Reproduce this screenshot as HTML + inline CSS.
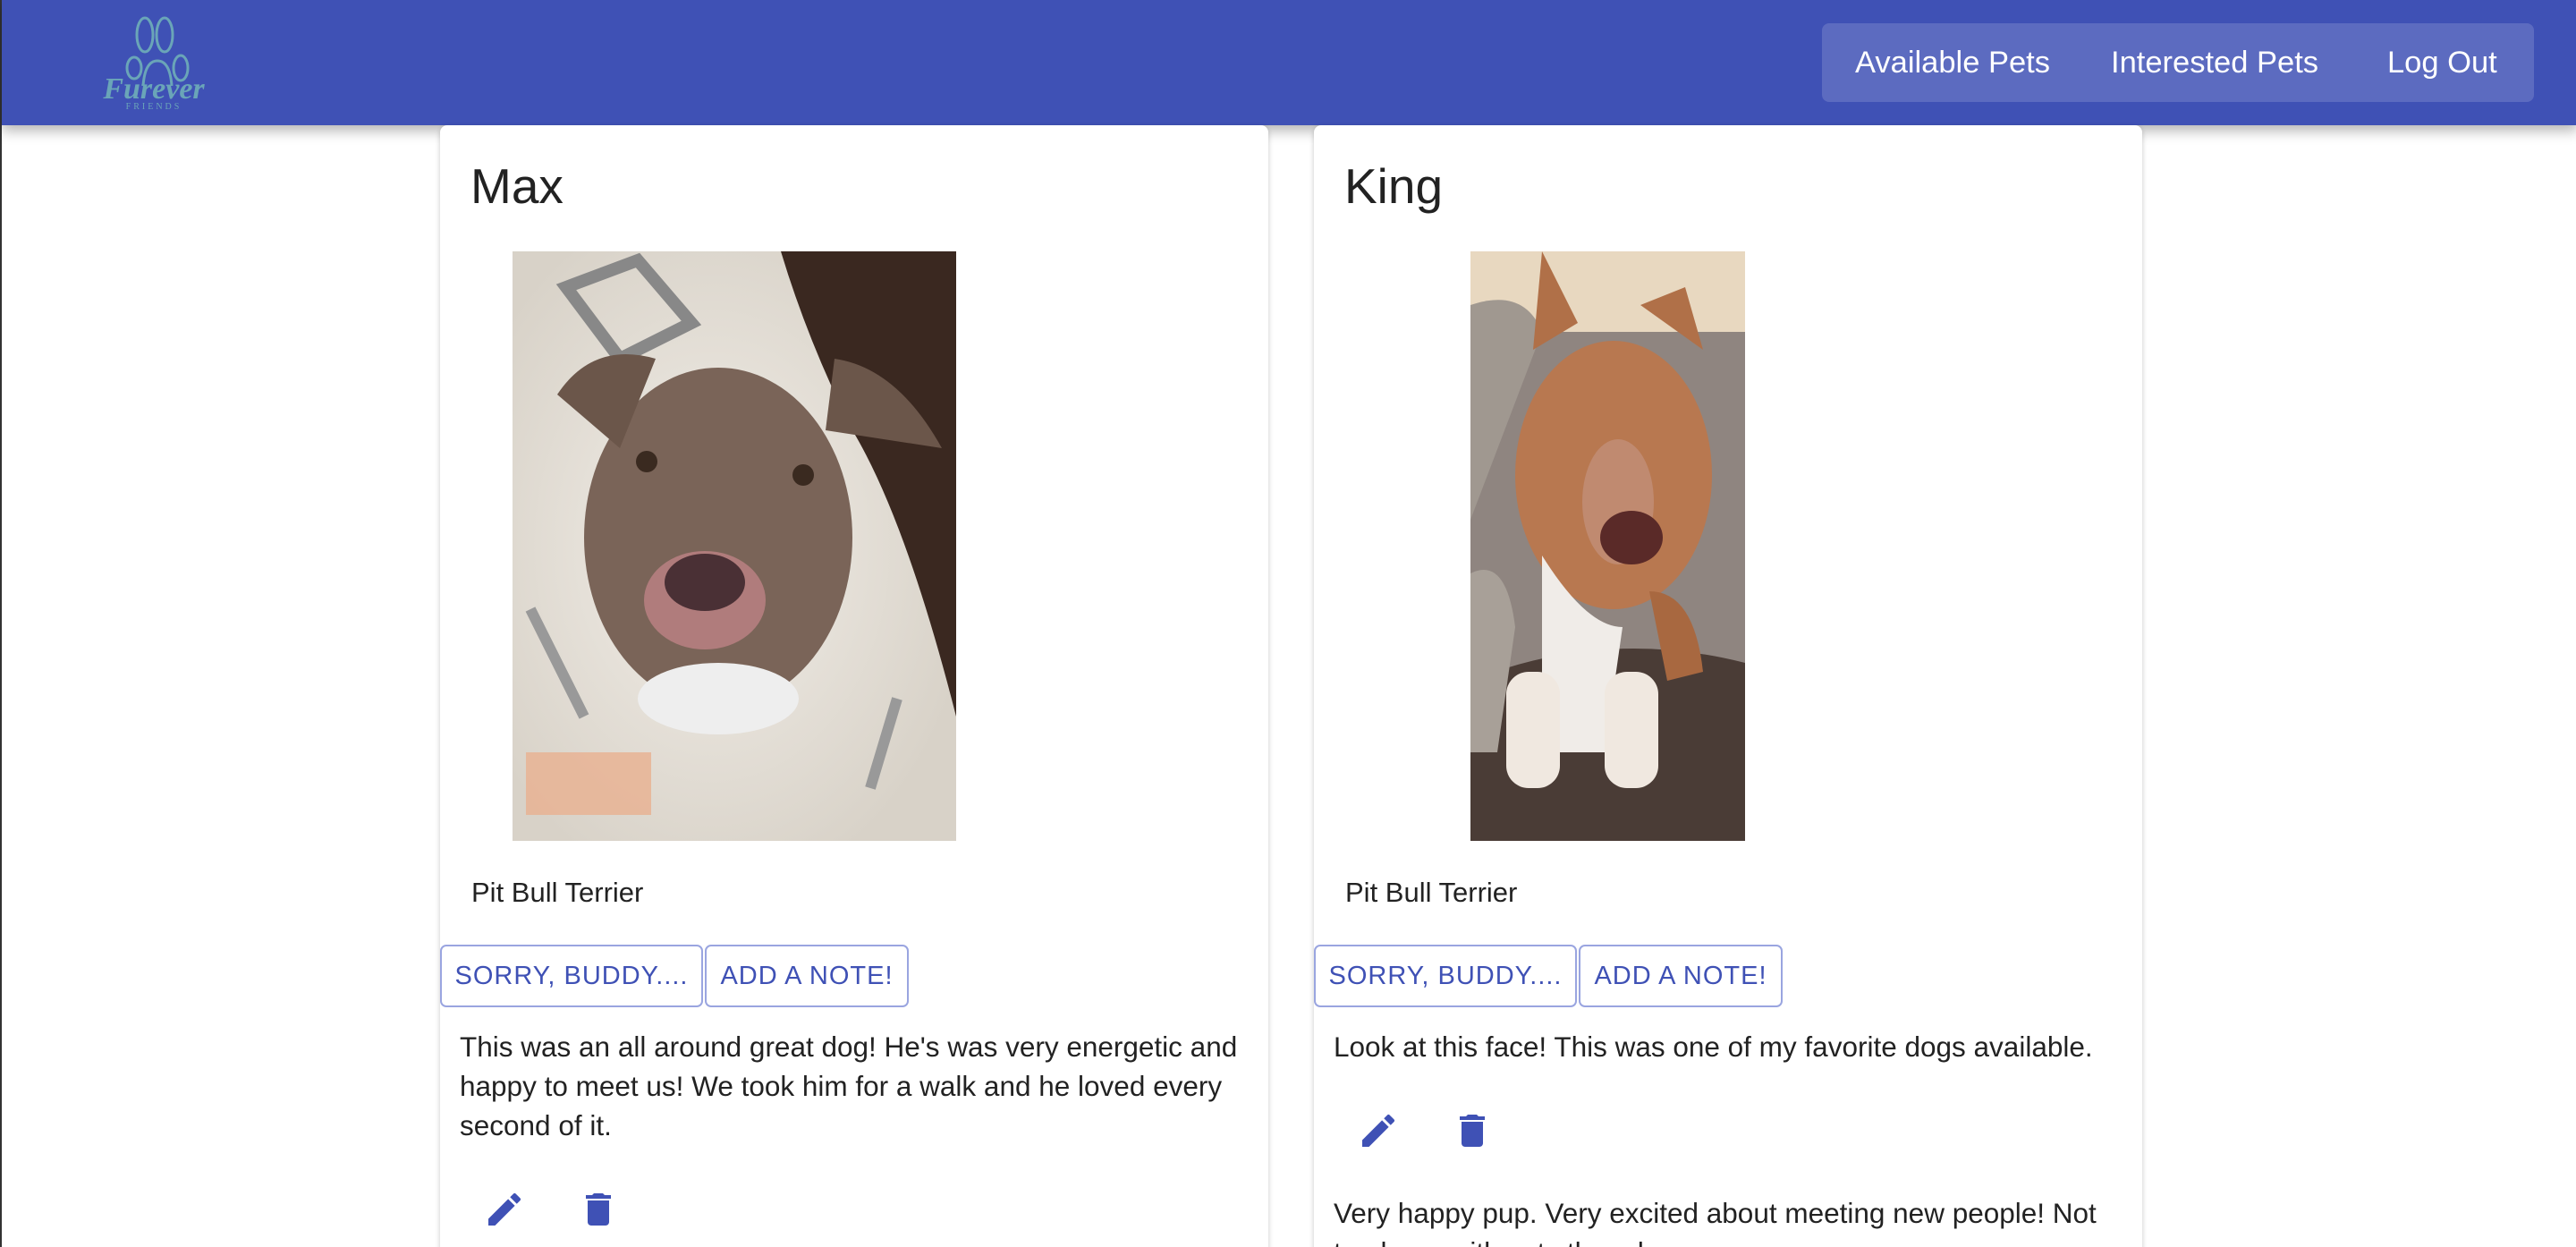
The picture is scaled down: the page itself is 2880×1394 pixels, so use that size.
<!DOCTYPE html>
<html><head><meta charset="utf-8"><style>
*{margin:0;padding:0;box-sizing:border-box}
html,body{width:2880px;height:1394px;overflow:hidden;background:#fff;font-family:"Liberation Sans",Arial,sans-serif}
body{border-left:2px solid #333;position:relative}
.hdr{position:absolute;left:0;top:0;width:2880px;height:140px;background:#3f51b5;box-shadow:0 6px 14px rgba(0,0,0,.3);z-index:2}
.nav{position:absolute;left:2035px;top:26px;width:796px;height:88px;background:#5c6bc0;border-radius:8px}
.nav span{position:absolute;top:22px;color:#fff;font-size:34.5px;line-height:44px}
.card{position:absolute;top:140px;width:926px;height:1300px;background:#fff;border-radius:8px;box-shadow:0 2px 6px rgba(0,0,0,.22);z-index:3;overflow:hidden}
.title{position:absolute;left:34px;top:36px;font-size:55px;color:#222}
.breed{position:absolute;left:35px;top:840px;font-size:31px;color:#222}
.btn{position:absolute;top:916px;height:70px;border:2px solid #9aa5e0;border-radius:7px;color:#3f51b5;font-size:29px;line-height:66px;text-align:center;letter-spacing:1px}
.note{position:absolute;left:22px;width:880px;font-size:31.5px;line-height:44px;color:#222}
.ic{position:absolute;width:48px;height:48px}
</style></head><body>
<div class="hdr">
 <svg style="position:absolute;left:112px;top:18px" width="118" height="106" viewBox="0 0 118 106">
  <g fill="none" stroke="#6aa5b8" stroke-width="3">
   <ellipse cx="48" cy="21" rx="9" ry="19"/><ellipse cx="70" cy="21" rx="9" ry="19"/>
   <ellipse cx="36" cy="58" rx="8" ry="12"/><ellipse cx="88" cy="58" rx="8" ry="14"/>
   <path d="M46 78 Q48 50 62 50 Q76 50 78 78"/>
  </g>
  <text x="58" y="92" text-anchor="middle" font-family="Liberation Serif,serif" font-style="italic" font-weight="bold" font-size="34" fill="#6aa5b8">Furever</text>
  <text x="58" y="104" text-anchor="middle" font-family="Liberation Serif,serif" font-size="10" letter-spacing="3" fill="#6aa5b8">FRIENDS</text>
 </svg>
 <div class="nav"><span style="left:37px">Available Pets</span><span style="left:323px">Interested Pets</span><span style="left:632px">Log Out</span></div>
</div>

<div class="card" style="left:490px">
 <div class="title">Max</div>
 <svg style="position:absolute;left:81px;top:141px" width="496" height="659" viewBox="0 0 496 659">
  <defs><radialGradient id="g1" cx=".45" cy=".5" r=".6"><stop offset="0" stop-color="#f2eee8"/><stop offset="1" stop-color="#d8d2c8"/></radialGradient></defs>
  <rect width="496" height="659" fill="url(#g1)"/>
  <path d="M300 0 H496 V520 Q440 300 380 200 Q330 100 300 0Z" fill="#3a2820"/>
  <path d="M60 40 L140 10 L200 80 L120 120Z" fill="none" stroke="#888" stroke-width="14"/>
  <path d="M20 400 L80 520 M430 500 L400 600" stroke="#999" stroke-width="12"/>
  <ellipse cx="230" cy="320" rx="150" ry="190" fill="#7a6458"/>
  <path d="M50 160 Q90 100 160 120 L120 220Z" fill="#6b564a"/>
  <path d="M360 120 Q430 130 480 220 L350 200Z" fill="#6b564a"/>
  <ellipse cx="215" cy="390" rx="68" ry="55" fill="#b07c7c"/>
  <ellipse cx="215" cy="370" rx="45" ry="32" fill="#4a3035"/>
  <circle cx="150" cy="235" r="12" fill="#3a2a20"/><circle cx="325" cy="250" r="12" fill="#3a2a20"/>
  <ellipse cx="230" cy="500" rx="90" ry="40" fill="#eee"/>
  <rect x="15" y="560" width="140" height="70" fill="#e8b090" opacity=".8"/>
 </svg>
 <div class="breed">Pit Bull Terrier</div>
 <div class="btn" style="left:0;width:294px">SORRY, BUDDY....</div>
 <div class="btn" style="left:296px;width:228px">ADD A NOTE!</div>
 <div class="note" style="top:1008px">This was an all around great dog! He's was very energetic and happy to meet us! We took him for a walk and he loved every second of it.</div>
 <svg class="ic" style="left:48px;top:1188px" viewBox="0 0 24 24"><path fill="#3f51b5" d="M3 17.25V21h3.75L17.81 9.94l-3.75-3.75L3 17.25zM20.71 7.04a1 1 0 000-1.41l-2.34-2.34a1 1 0 00-1.41 0l-1.83 1.83 3.75 3.75 1.83-1.83z"/></svg>
 <svg class="ic" style="left:153px;top:1188px" viewBox="0 0 24 24"><path fill="#3f51b5" d="M6 19c0 1.1.9 2 2 2h8c1.1 0 2-.9 2-2V7H6v12zM19 4h-3.5l-1-1h-5l-1 1H5v2h14V4z"/></svg>
</div>

<div class="card" style="left:1467px">
 <div class="title">King</div>
 <svg style="position:absolute;left:175px;top:141px" width="307" height="659" viewBox="0 0 307 659">
  <rect width="307" height="659" fill="#8f8580"/>
  <rect width="307" height="90" fill="#e8d8c0"/>
  <path d="M0 60 Q60 40 80 90 L0 300Z" fill="#a09890"/>
  <path d="M0 480 Q150 420 307 460 V659 H0Z" fill="#4a3c36"/>
  <path d="M0 360 Q40 340 50 420 L30 560 L0 560Z" fill="#a8a098"/>
  <ellipse cx="160" cy="250" rx="110" ry="150" fill="#b87850"/>
  <path d="M70 110 L80 0 L120 80Z M190 60 L240 40 L260 110Z" fill="#b07048"/>
  <ellipse cx="165" cy="280" rx="40" ry="70" fill="#c08a70"/>
  <ellipse cx="180" cy="320" rx="35" ry="30" fill="#5a2a28"/>
  <path d="M80 340 Q130 420 170 420 L150 560 L80 560Z" fill="#f0ece8"/>
  <rect x="40" y="470" width="60" height="130" rx="25" fill="#f0e8e0"/>
  <rect x="150" y="470" width="60" height="130" rx="25" fill="#f0e8e0"/>
  <path d="M200 380 Q250 380 260 470 L220 480Z" fill="#a86840"/>
 </svg>
 <div class="breed">Pit Bull Terrier</div>
 <div class="btn" style="left:0;width:294px">SORRY, BUDDY....</div>
 <div class="btn" style="left:296px;width:228px">ADD A NOTE!</div>
 <div class="note" style="top:1008px">Look at this face! This was one of my favorite dogs available.</div>
 <svg class="ic" style="left:48px;top:1100px" viewBox="0 0 24 24"><path fill="#3f51b5" d="M3 17.25V21h3.75L17.81 9.94l-3.75-3.75L3 17.25zM20.71 7.04a1 1 0 000-1.41l-2.34-2.34a1 1 0 00-1.41 0l-1.83 1.83 3.75 3.75 1.83-1.83z"/></svg>
 <svg class="ic" style="left:153px;top:1100px" viewBox="0 0 24 24"><path fill="#3f51b5" d="M6 19c0 1.1.9 2 2 2h8c1.1 0 2-.9 2-2V7H6v12zM19 4h-3.5l-1-1h-5l-1 1H5v2h14V4z"/></svg>
 <div class="note" style="top:1194px">Very happy pup. Very excited about meeting new people! Not too keen with cats though.</div>
</div>
</body></html>
